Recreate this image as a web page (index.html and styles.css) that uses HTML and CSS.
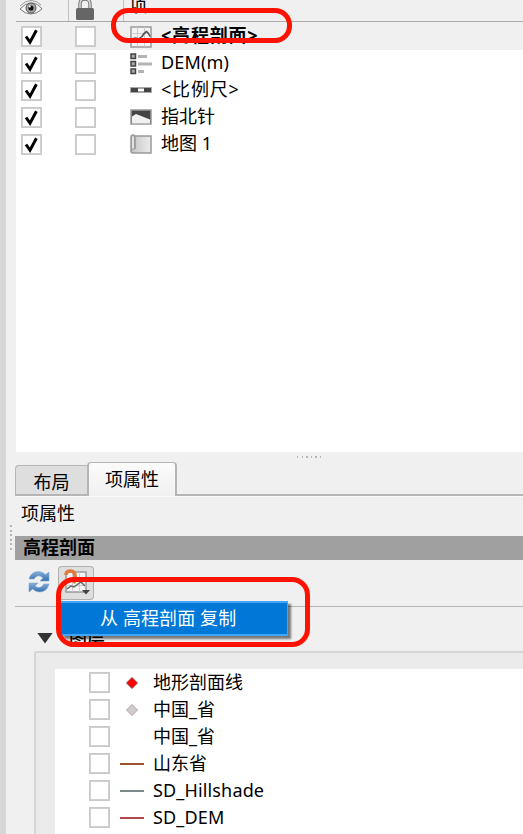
FILE: index.html
```html
<!DOCTYPE html>
<html lang="zh-CN">
<head>
  <meta charset="UTF-8" />
  <meta name="viewport" content="width=device-width, initial-scale=1.0"/>
  <title>项属性</title>
  <link rel="stylesheet" href="styles.css">
</head>
<body>

  <svg class="symbols" width="0" height="0">
    <symbol id="tick" viewBox="0 0 21 21">
      <path d="M5 10.500l4 5.700L15.400 4.300" fill="none" stroke="#000" stroke-width="2.900"/>
    </symbol>
  </svg>

  <div class="window">
    <div class="edge"></div>
    <div class="gutter"><span class="dots-v"></span></div>

    <main class="panel">
      <section class="items">
        <div class="items-head">
          <div class="col-eye">
            <svg width="24" height="20" viewBox="0 0 24 20">
              <path d="M1 11Q6 5 12 5q7 0 11 6-5 5-11 5T1 11z" fill="#f4f4f4" stroke="#777" stroke-width="1"/>
              <path d="M1 8Q6 2.500 12 2.500T22 7" fill="none" stroke="#999" stroke-width="1"/>
              <circle cx="12" cy="10" r="5" fill="#a3aaa8" stroke="#555"/>
              <circle cx="12" cy="10" r="2.600" fill="#111"/>
              <circle cx="10.800" cy="8.500" r="1" fill="#fff"/>
            </svg>
          </div>
          <div class="col-lock">
            <svg width="18" height="24" viewBox="0 0 18 24">
              <path d="M4 14V8q0-5 5-5t5 5v6" fill="none" stroke="#777" stroke-width="3.400"/>
              <path d="M4 14V8q0-5 5-5t5 5v6" fill="none" stroke="#ddd" stroke-width="1.400"/>
              <rect x="0" y="12" width="18" height="12" rx="1.500" fill="#666"/>
            </svg>
          </div>
          <div class="col-name">项</div>
        </div>

        <div class="item selected">
          <span class="check"><svg width="21" height="21"><use href="#tick"/></svg></span>
          <span class="check"></span>
          <svg class="icon" width="22" height="22" viewBox="0 0 22 22">
            <rect x="1" y="1" width="20" height="20" fill="#f4f4f4" stroke="#999" stroke-width="1.500"/>
            <path d="M7.500 1v20M14.500 1v20M1 7.500h20M1 14.500h20" stroke="#ccc"/>
            <path d="M2 13.500q3-2 5-1t5-2q2-3.500 4.500-5 2 1 3.500 5" fill="none" stroke="#555" stroke-width="1.600"/>
          </svg>
          <span class="item-name wide">&lt;高程剖面&gt;</span>
        </div>
        <div class="item">
          <span class="check"><svg width="21" height="21"><use href="#tick"/></svg></span>
          <span class="check"></span>
          <svg class="icon" width="22" height="22" viewBox="0 0 22 22">
            <g fill="#aaa" stroke="#444" stroke-width="1.500">
              <rect x="1" y="1" width="4.500" height="4.500"/>
              <rect x="1" y="8.500" width="4.500" height="4.500"/>
              <rect x="1" y="16" width="4.500" height="4.500"/>
            </g>
            <path d="M8 3.500h9M8 11h14M8 18.500h6" stroke="#b3b3b3" stroke-width="3"/>
          </svg>
          <span class="item-name latin">DEM(m)</span>
        </div>
        <div class="item">
          <span class="check"><svg width="21" height="21"><use href="#tick"/></svg></span>
          <span class="check"></span>
          <svg class="icon" width="22" height="22" viewBox="0 0 22 22">
            <rect x=".500" y="7.500" width="21" height="5" fill="#444" stroke="#aaa"/>
            <rect x="8" y="8.500" width="6" height="3" fill="#fff"/>
          </svg>
          <span class="item-name wide">&lt;比例尺&gt;</span>
        </div>
        <div class="item">
          <span class="check"><svg width="21" height="21"><use href="#tick"/></svg></span>
          <span class="check"></span>
          <svg class="icon" width="22" height="22" viewBox="0 0 22 22">
            <rect x="1" y="3" width="20" height="14" fill="#444" stroke="#999" stroke-width="1.500"/>
            <path d="M2 9.500l4-2.500L20 12.500v4H2z" fill="#f0f0f0"/>
          </svg>
          <span class="item-name">指北针</span>
        </div>
        <div class="item">
          <span class="check"><svg width="21" height="21"><use href="#tick"/></svg></span>
          <span class="check"></span>
          <svg class="icon" width="22" height="22" viewBox="0 0 22 22">
            <defs>
              <linearGradient id="paper"><stop offset="0" stop-color="#c4c4c4"/><stop offset="1" stop-color="#ececec"/></linearGradient>
            </defs>
            <path d="M4 2h17v17H3q-2 0-2-2V3q0-2 2-2t2 2v12" fill="url(#paper)" stroke="#999" stroke-width="1.500"/>
            <path d="M1.500 17V3q0-1.500 1.500-1.500T4.500 3v12H3q-1.500 0-1.500 2z" fill="#e4e4e4" stroke="#999"/>
          </svg>
          <span class="item-name">地图 1</span>
        </div>
      </section>

      <div class="splitter"><span class="dots-h"></span></div>

      <nav class="tabs">
        <a class="tab">布局</a>
        <a class="tab active">项属性</a>
      </nav>

      <div class="dock-title">项属性</div>
      <div class="section-title">高程剖面</div>

      <div class="toolbar">
        <svg class="refresh" width="22" height="24" viewBox="0 0 22 24">
          <defs>
            <linearGradient id="blue" x2="0" y2="1"><stop offset="0" stop-color="#85afd9"/><stop offset="1" stop-color="#356fae"/></linearGradient>
          </defs>
          <path d="M1 9Q3 1.500 10.500 1.500q4 0 7 3L21 2v9h-9l3-3q-5-5-9 1z" fill="url(#blue)" stroke="#7fa7d0" stroke-width=".600"/>
          <path d="M21 14q-2 8-9.500 8-4 0-7-3L1 22v-9h9l-3 3q5 4 9-2z" fill="url(#blue)" stroke="#7fa7d0" stroke-width=".600"/>
        </svg>
        <div class="tool-button">
          <svg width="36" height="34" viewBox="0 0 36 34">
            <rect x="8" y="6" width="20" height="20" fill="#f3f3f3" stroke="#999" stroke-width="1.500"/>
            <path d="M14.500 6v20M21.500 6v20M8 12.500h20M8 19.500h20" stroke="#ccc"/>
            <path d="M9 23l4-3 3 1 4-3 3-2 4 4" fill="none" stroke="#666" stroke-width="1.500"/>
            <path d="M8 9q0-4 4.500-4t4.500 5v3" fill="none" stroke="#e27a3c" stroke-width="3.600"/>
            <path d="M10 12h12l-5.500 6z" fill="#e27a3c"/>
            <path d="M24 24h8l-4 4.500z" fill="#444"/>
          </svg>
          <div class="menu">从 高程剖面 复制</div>
          <div class="mark mark-menu"></div>
        </div>
      </div>

      <section class="group">
        <div class="group-head"><span class="arrow"></span>图层</div>
        <div class="group-box">
          <div class="layers">
            <div class="layer">
              <span class="check"></span>
              <svg width="24" height="14" viewBox="0 0 24 14"><path d="M12 1.500L17.500 7 12 12.500 6.500 7z" fill="#f00" stroke="#8c4a4a"/></svg>
              <span class="layer-name">地形剖面线</span>
            </div>
            <div class="layer">
              <span class="check"></span>
              <svg width="24" height="14" viewBox="0 0 24 14"><path d="M12 1.500L17.500 7 12 12.500 6.500 7z" fill="#ccc" stroke="#bd9ba7"/></svg>
              <span class="layer-name">中国_省</span>
            </div>
            <div class="layer">
              <span class="check"></span>
              <svg width="24" height="14"></svg>
              <span class="layer-name">中国_省</span>
            </div>
            <div class="layer">
              <span class="check"></span>
              <span class="line brown"></span>
              <span class="layer-name">山东省</span>
            </div>
            <div class="layer">
              <span class="check"></span>
              <span class="line slate"></span>
              <span class="layer-name latin">SD_Hillshade</span>
            </div>
            <div class="layer">
              <span class="check"></span>
              <span class="line red"></span>
              <span class="layer-name latin">SD_DEM</span>
            </div>
          </div>
        </div>
      </section>
    </main>
    <div class="mark mark-item"></div>
  </div>

</body>
</html>
```
FILE: styles.css
```css
* {
  box-sizing: border-box;
}

body {
  margin: 0;
  font-family: "Noto Sans", "Noto Sans CJK SC", sans-serif;
  font-size: 18px;
  line-height: 26px;
  color: #000;
  background-color: #f0f0f0;
  overflow: hidden;
}

.symbols {
  display: none;
}

.window {
  position: relative;
  display: flex;
  height: 834px;
  overflow: hidden;
}

.edge {
  width: 6px;
  background-color: #d6d6d6;
}

.gutter {
  width: 9px;
  padding: 525px 0 0 4px;
}

.dots-v {
  display: block;
  width: 2px;
  height: 25px;
  background: repeating-linear-gradient(to bottom, #b5b5b5 0 2px, transparent 2px 4.6px);
}

.panel {
  flex: 1;
  min-width: 0;
  display: flex;
  flex-direction: column;
}

/* item list */
.items {
  height: 452px;
  margin-left: 1px;
  background-color: white;
}

.items-head {
  display: flex;
  height: 22px;
  background-color: #f0f0f0;
  border-bottom: 1px solid #aaa;
}

.items-head div {
  height: 21px;
}

.col-eye {
  width: 53px;
  padding-left: 3px;
  border-right: 1px solid #c0c0c0;
}

.col-eye svg {
  display: block;
  margin-top: -2px;
}

.col-lock {
  width: 55px;
  padding-left: 7px;
  border-right: 1px solid #c0c0c0;
}

.col-lock svg {
  display: block;
  margin-top: -4px;
}

.col-name {
  padding-left: 5px;
  line-height: 10px;
}

.item {
  display: flex;
  align-items: center;
  height: 27px;
  padding-left: 5px;
}

.item.selected {
  height: 28px;
  padding-top: 1px;
  background-color: #f0f0f0;
}

.item.selected .item-name {
  font-weight: bold;
}

.item .check {
  margin-right: 33px;
}

.item-name {
  margin: -4px 0 0 9px;
}

.wide {
  letter-spacing: 0.8px;
}

.latin {
  letter-spacing: 0.15px;
}

.check {
  flex: none;
  width: 21px;
  height: 21px;
  background-color: white;
  box-shadow: inset 0 0 0 1px #c9c9c9, inset 0 0 0 2px #d0d0d0;
}

.check svg {
  display: block;
}

.item .icon {
  margin-left: 1px;
}

.splitter {
  height: 10px;
  padding: 4px 0 0 282px;
}

.dots-h {
  display: block;
  width: 25px;
  height: 2px;
  background: repeating-linear-gradient(to right, #b5b5b5 0 1.500px, transparent 1.500px 4.600px);
}

/* tabs */
.tabs {
  display: flex;
  align-items: flex-end;
  height: 34px;
  box-shadow: inset 0 -2px #b5b5b5, 0 1px #fafafa;
}

.tab {
  width: 72px;
  height: 31px;
  padding-top: 3px;
  text-align: center;
  border: 2px solid #b5b5b5;
  border-width: 1px 0 2px 1px;
  border-radius: 4px 0 0 0;
  background-color: #dedede;
}

.tab.active {
  width: 90px;
  height: 34px;
  border-width: 1px 2px 0 2px;
  border-radius: 4px 4px 0 0;
  background: linear-gradient(#fbfbfb, #f0f0f0);
}

.dock-title {
  height: 40px;
  padding: 4px 0 0 6px;
}

.section-title {
  height: 24px;
  padding-left: 8px;
  line-height: 23px;
  font-weight: bold;
  background-color: #a0a0a0;
}

.toolbar {
  display: flex;
  height: 47px;
  padding: 6px 0 0 13px;
  border-bottom: 1px solid #b5b5b5;
}

.refresh {
  margin: 4px 8px 0 0;
}

.tool-button {
  position: relative;
  width: 36px;
  height: 34px;
  border-radius: 4px;
  background-color: #dfdfdf;
  box-shadow: inset 0 0 0 1px #b0b0b0;
}

.tool-button svg {
  display: block;
}

.menu {
  position: absolute;
  left: 3px;
  top: 35px;
  width: 227px;
  height: 35px;
  padding-left: 39px;
  line-height: 31px;
  letter-spacing: 0.1px;
  white-space: nowrap;
  color: white;
  background-color: #0078d7;
  border: 1px solid #42a5f5;
  border-width: 2px 1px 2px 0;
  box-shadow: 3px 3px 2px rgba(0, 0, 0, 0.5);
  z-index: 1;
}

/* highlight outlines */
.mark {
  position: absolute;
  border: 5px solid #ff1200;
  z-index: 2;
}

.mark-item {
  left: 111px;
  top: 8px;
  width: 181px;
  height: 35px;
  border-radius: 17px;
}

.mark-menu {
  left: -2px;
  top: 11px;
  width: 254px;
  height: 70px;
  border-radius: 18px;
}

/* layer group */
.group-head {
  display: flex;
  align-items: center;
  height: 44px;
  padding: 18px 0 0 22px;
  font-weight: 500;
}

.arrow {
  width: 16px;
  height: 11px;
  margin-right: 16px;
  background-color: #333;
  clip-path: polygon(0 0, 100% 0, 50% 100%);
}

.group-box {
  height: 183px;
  margin-left: 19px;
  padding: 16px 0 0 19px;
  background-color: #ebebeb;
  border: 2px solid #d5d5d5;
  border-width: 2px 0 0 2px;
  border-radius: 3px 0 0 0;
}

.layers {
  height: 165px;
  background-color: white;
}

.layer {
  display: flex;
  align-items: center;
  height: 27px;
  padding-left: 34px;
}

.layer-name {
  margin-top: -2px;
}

.layer svg,
.line {
  flex: none;
  width: 24px;
  margin: 0 9px 0 10px;
}

.line {
  height: 2px;
}

.brown { background-color: #98522c; }
.slate { background-color: #7c8a8c; }
.red { background-color: #b5484d; }
```
